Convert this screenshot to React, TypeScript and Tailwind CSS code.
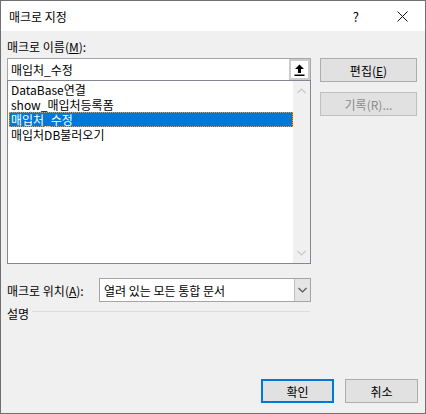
const font = { fontFamily: '"Noto Sans CJK KR", "Noto Sans", sans-serif' };

const Chevron = ({ up = false, color = '#c8c8c8' }: { up?: boolean; color?: string }) => (
  <svg width="9" height="6" viewBox="0 0 9 6">
    <path
      d={up ? 'M0.5 5 L4.5 1 L8.5 5' : 'M0.5 1 L4.5 5 L8.5 1'}
      fill="none"
      stroke={color}
      strokeWidth="1.2"
    />
  </svg>
);

const App = () => {
  const items = ['DataBase연결', 'show_매입처등록폼', '매입처_수정', '매입처DB불러오기'];

  return (
    <div
      className="w-[426px] h-[414px] border border-[#707070] flex flex-col bg-[#f0f0f0] text-[12px] text-black overflow-hidden"
      style={font}
    >
      {/* ------------------------title bar--------------------- */}
      <div className="h-[30px] bg-white flex items-center shrink-0">
        <span className="ml-[8px] text-[12px] leading-[15px]">매크로 지정</span>
        <span className="ml-auto mr-[38px] text-[13px] leading-[15px]">?</span>
        <svg width="11" height="11" viewBox="0 0 11 11" className="mr-[17px]">
          <path d="M0.5 0.5 L10.5 10.5 M10.5 0.5 L0.5 10.5" stroke="#111" strokeWidth="1" />
        </svg>
      </div>

      <div className="pl-[6px] flex flex-col">
        <p className="mt-[8px] leading-[15px]">
          매크로 이름(<span className="underline">M</span>):
        </p>

        <div className="flex flex-row mt-[4px]">
          <div className="w-[304px] flex flex-col">
            {/* name input */}
            <div className="h-[22px] bg-white border border-[#a5a5a5] border-b-0 flex items-center">
              <span className="pl-[3px] leading-[15px]">매입처_수정</span>
              <div className="ml-auto h-[21px] w-[21px] bg-[#cccccc] p-[2px] flex">
                <div className="flex-1 bg-white flex items-center justify-center">
                  <svg width="11" height="12" viewBox="0 0 11 12">
                    <path d="M5.5 0.5 L10 5 L7 5 L7 9 L4 9 L4 5 L1 5 Z" fill="#000" />
                    <rect x="0.5" y="10.5" width="10" height="1.5" fill="#000" />
                  </svg>
                </div>
              </div>
            </div>

            {/* macro list */}
            <div className="h-[184px] bg-white border border-[#828790] flex flex-row">
              <div className="flex-1 flex flex-col pt-[1px] pl-[1px]">
                {items.map((it, i) =>
                  i === 2 ? (
                    <div
                      key={it}
                      className="h-[15px] leading-[15px] pl-[2px] bg-[#0078d7] text-white outline outline-1 outline-dotted outline-offset-[-1px] outline-[#f29a3a]"
                    >
                      {it}
                    </div>
                  ) : (
                    <div key={it} className="h-[15px] leading-[15px] pl-[2px]">
                      {it}
                    </div>
                  )
                )}
              </div>
              <div className="w-[17px] bg-[#f0f0f0] flex flex-col items-center justify-between py-[7px]">
                <Chevron up />
                <Chevron />
              </div>
            </div>
          </div>

          {/* right side buttons */}
          <div className="ml-[9px] w-[97px] flex flex-col gap-[10px]">
            <button className="h-[24px] bg-[#e1e1e1] border border-[#adadad] leading-[15px]">
              편집(<span className="underline">E</span>)
            </button>
            <button className="h-[24px] bg-[#e1e1e1] border border-[#bfbfbf] text-[#8a8a8a] leading-[15px]">
              기록(R)...
            </button>
          </div>
        </div>

        {/* location row */}
        <div className="flex flex-row items-center mt-[14px]">
          <span className="w-[92px] leading-[15px]">
            매크로 위치(<span className="underline">A</span>):
          </span>
          <div className="w-[212px] h-[24px] bg-white border border-[#a5a5a5] flex items-center">
            <span className="pl-[4px] leading-[15px]">열려 있는 모든 통합 문서</span>
            <div className="ml-auto h-full w-[16px] bg-[#e5e5e5] border-l border-[#c0c0c0] flex items-center justify-center">
              <Chevron color="#555" />
            </div>
          </div>
        </div>

        <div className="flex flex-row items-center mt-[4px]">
          <span className="leading-[15px]">설명</span>
          <div className="ml-[3px] w-[278px] h-[1px] bg-[#dcdcdc] -mt-[4px]" />
        </div>
      </div>

      {/* ------------------------bottom buttons--------------------- */}
      <div className="mt-auto mb-[10px] flex flex-row justify-end pr-[7px] gap-[11px]">
        <button className="w-[73px] h-[24px] bg-[#e1e1e1] border-2 border-[#0078d7] leading-[15px]">
          확인
        </button>
        <button className="w-[73px] h-[24px] bg-[#e1e1e1] border border-[#adadad] leading-[15px]">
          취소
        </button>
      </div>
    </div>
  );
};

export default App;
